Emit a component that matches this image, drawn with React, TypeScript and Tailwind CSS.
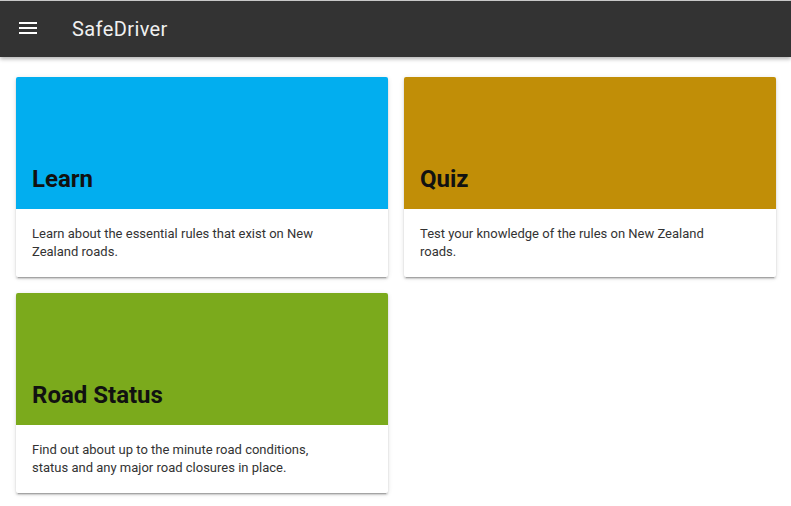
import React from "react"

const cards = [
  {
    title: "Learn",
    text: "Learn about the essential rules that exist on New Zealand roads.",
    color: "bg-[#02aeef]",
  },
  {
    title: "Quiz",
    text: "Test your knowledge of the rules on New Zealand roads.",
    color: "bg-[#c18e07]",
  },
  {
    title: "Road Status",
    text: "Find out about up to the minute road conditions, status and any major road closures in place.",
    color: "bg-[#7baa1c]",
  },
]

function MenuIcon() {
  return (
    <svg width="24" height="24" viewBox="0 0 24 24" fill="#ffffff">
      <path d="M3 18h18v-2H3v2zm0-5h18v-2H3v2zm0-7v2h18V6H3z" />
    </svg>
  )
}

export default function App() {
  return (
    <div className="min-h-[506px] bg-white font-['Roboto',sans-serif]">
      <header className="relative z-10 flex h-[57px] items-center border-t border-[#c8c8c8] bg-[#333333] shadow-[0_2px_4px_rgba(0,0,0,0.3)]">
        <div className="ml-4 mt-[-2px] flex h-6 w-6 items-center justify-center">
          <MenuIcon />
        </div>
        <div className="ml-8 text-[20px] leading-none tracking-[0.02em] text-[#f0f0f0]">SafeDriver</div>
      </header>

      <main className="grid grid-cols-2 gap-4 pl-4 pr-[15px] pt-5">
        {cards.map((card) => (
          <div
            key={card.title}
            className="overflow-hidden rounded-[2px] bg-white shadow-[0_2px_2px_0_rgba(0,0,0,0.14),0_3px_1px_-2px_rgba(0,0,0,0.2),0_1px_5px_0_rgba(0,0,0,0.12)]"
          >
            <div className={`flex h-[132px] items-end px-4 pb-[18px] ${card.color}`}>
              <h2 className="text-[24px] font-bold leading-6 text-[#111111]">{card.title}</h2>
            </div>
            <div className="w-[90%] p-4 text-[13px] leading-[18px] text-[#333333]">{card.text}</div>
          </div>
        ))}
      </main>
    </div>
  )
}
